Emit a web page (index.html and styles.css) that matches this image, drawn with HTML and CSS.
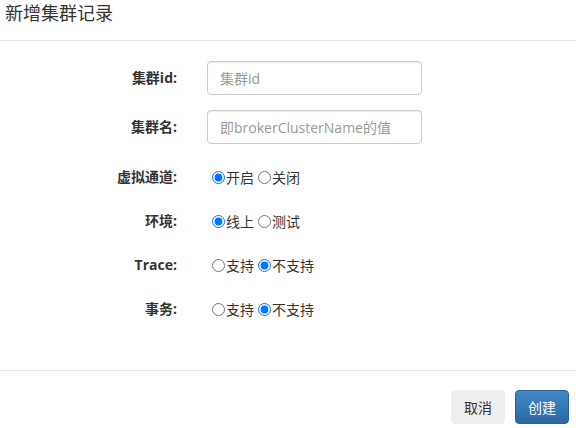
FILE: index.html
```html
<!DOCTYPE html>
<html lang="zh-CN">
<head>
<meta charset="utf-8">
<title>新增集群记录</title>
<link rel="stylesheet" href="styles.css">
</head>
<body>
<div class="modal">
  <div class="modal-header">
    <h4 class="modal-title">新增集群记录</h4>
  </div>
  <div class="modal-body">
    <form class="form">
      <div class="row row-input">
        <label class="control-label">集群id:</label>
        <input class="form-control" type="text" placeholder="集群id">
      </div>
      <div class="row row-input row-last-input">
        <label class="control-label">集群名:</label>
        <input class="form-control" type="text" placeholder="即brokerClusterName的值">
      </div>
      <div class="row row-radio">
        <label class="control-label">虚拟通道:</label>
        <div class="radios">
          <label class="opt"><input type="radio" name="vc" checked>开启</label>
          <label class="opt"><input type="radio" name="vc">关闭</label>
        </div>
      </div>
      <div class="row row-radio">
        <label class="control-label">环境:</label>
        <div class="radios">
          <label class="opt"><input type="radio" name="env" checked>线上</label>
          <label class="opt"><input type="radio" name="env">测试</label>
        </div>
      </div>
      <div class="row row-radio">
        <label class="control-label">Trace:</label>
        <div class="radios">
          <label class="opt"><input type="radio" name="trace">支持</label>
          <label class="opt"><input type="radio" name="trace" checked>不支持</label>
        </div>
      </div>
      <div class="row row-radio">
        <label class="control-label">事务:</label>
        <div class="radios">
          <label class="opt"><input type="radio" name="tx">支持</label>
          <label class="opt"><input type="radio" name="tx" checked>不支持</label>
        </div>
      </div>
    </form>
  </div>
  <div class="modal-footer">
    <button class="btn btn-default" type="button">取消</button>
    <button class="btn btn-primary" type="button">创建</button>
  </div>
</div>
</body>
</html>
```

FILE: styles.css
```css
* { box-sizing: border-box; }
html, body {
  margin: 0;
  padding: 0;
  background: #fff;
}
body {
  font-family: "Open Sans", "Noto Sans CJK SC", sans-serif;
  font-size: 14px;
  color: #333;
}
.modal {
  width: 576px;
  height: 428px;
  display: flex;
  flex-direction: column;
}
.modal-header {
  height: 41px;
  padding: 0 0 0 5px;
  border-bottom: 1px solid #e5e5e5;
}
.modal-title {
  margin: 0;
  font-size: 18px;
  font-weight: normal;
  line-height: 25px;
  color: #333;
  font-family: "Noto Sans CJK SC", sans-serif;
}
.modal-body {
  height: 329px;
  padding: 20px 0 0 0;
}
.form {
  display: flex;
  flex-direction: column;
}
.row {
  display: grid;
  grid-template-columns: 177px 215px;
  column-gap: 30px;
  align-items: center;
}
.row-input { height: 34px; margin-bottom: 15px; }
.row-last-input { margin-bottom: 23px; }
.row-radio { height: 20px; margin-bottom: 24px; }
.control-label {
  text-align: right;
  font-weight: bold;
  line-height: 20px;
  white-space: nowrap;
}
.form-control {
  width: 215px;
  height: 34px;
  padding: 6px 12px;
  font-family: "Open Sans", "Noto Sans CJK SC", sans-serif;
  font-size: 14px;
  color: #555;
  border: 1px solid #ccc;
  border-radius: 4px;
  box-shadow: inset 0 1px 1px rgba(0,0,0,.075);
  outline: none;
}
.form-control::placeholder { color: #999; }
.radios {
  display: flex;
  align-items: center;
  gap: 4px;
  padding-left: 5px;
  line-height: 20px;
}
.opt {
  display: inline-flex;
  align-items: center;
  white-space: nowrap;
  font-family: "Noto Sans CJK SC", sans-serif;
}
.opt input {
  width: 13px;
  height: 13px;
  margin: 0 1px 0 0;
}
.modal-footer {
  flex: 1;
  border-top: 1px solid #e5e5e5;
  padding: 19px 7px 0 0;
  display: flex;
  justify-content: flex-end;
  align-items: flex-start;
  gap: 10px;
}
.btn {
  height: 34px;
  padding: 6px 12px;
  font-family: "Noto Sans CJK SC", sans-serif;
  font-size: 14px;
  line-height: 20px;
  border-radius: 4px;
  border: 1px solid transparent;
  cursor: pointer;
}
.btn-default {
  background: #eeeeee;
  border-color: #eeeeee;
  color: #333;
}
.btn-primary {
  background: linear-gradient(to bottom, #3e89c8 0%, #2b69a3 100%);
  border-color: #2a6199;
  color: #fff;
}
```
